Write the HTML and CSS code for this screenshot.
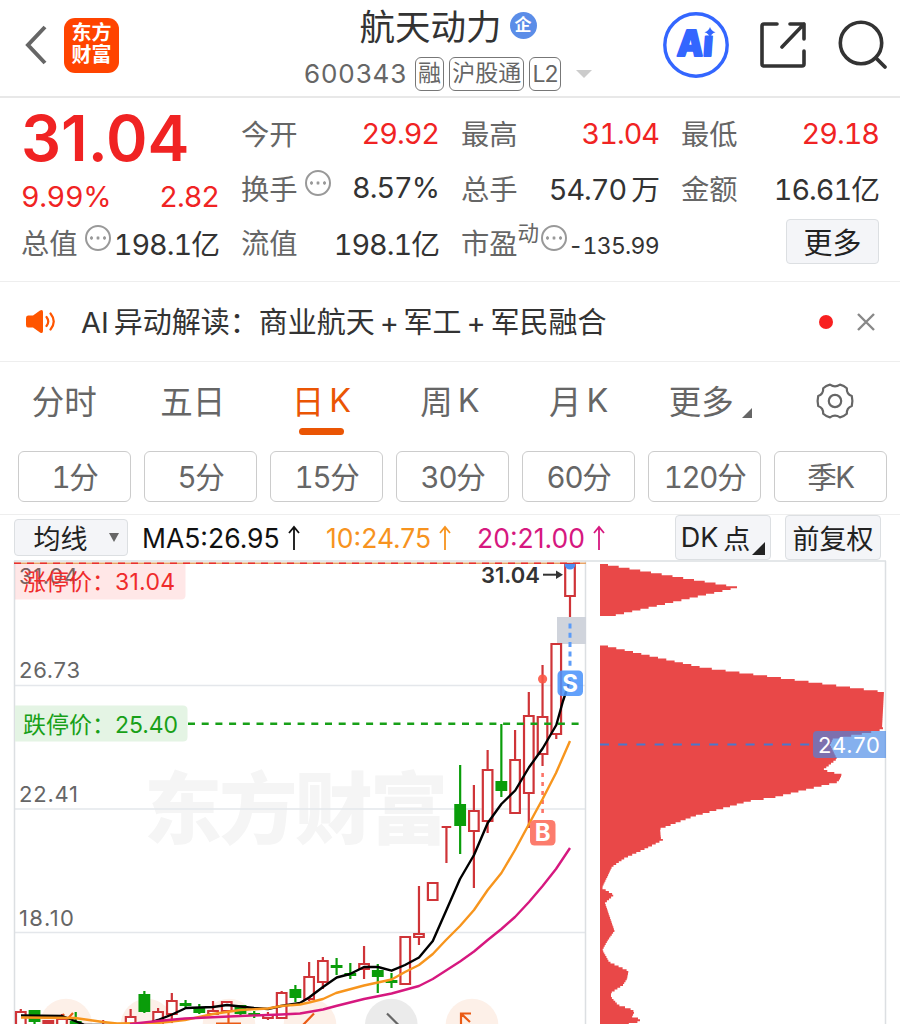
FILE: index.html
```
<!DOCTYPE html>
<html lang="zh-CN">
  <head>
    <meta charset="UTF-8" />
    <meta name="viewport" content="width=device-width,initial-scale=1.0" />
    <title>航天动力 600343</title>
    <link rel="stylesheet" href="styles.css">
  </head>
  <body>
    <header>
      <div class="left">
        <svg class="back" width="24" height="42" viewBox="0 0 24 42"><path d="M21 3 L4 21 L21 39" fill="none" stroke="#666" stroke-width="4" /></svg>
        <div class="logo"><span>东方</span><span>财富</span></div>
      </div>
      <div class="stock">
        <h1>航天动力 <span class="badge">企</span></h1>
        <div class="code">
          <span class="number">600343</span>
          <span class="tag">融</span>
          <span class="tag wide">沪股通</span>
          <span class="tag">L2</span>
          <i class="arrow-down"></i>
        </div>
      </div>
      <div class="icons">
        <svg width="66" height="66" viewBox="0 0 66 66">
          <circle cx="33" cy="33" r="31.2" fill="none" stroke="#3366ff" stroke-width="3.4" />
          <text class="ai" x="16.500" y="44.500" textLength="36" lengthAdjust="spacingAndGlyphs" transform="skewX(-4)">Aı</text>
          <path d="M47 15 Q48.2 19 52.5 20.2 Q48.2 21.500 47 25.500 Q45.800 21.500 41.500 20.200 Q45.800 19 47 15Z" fill="#3366ff" />
        </svg>
        <svg class="share" width="50" height="50" viewBox="0 0 50 50">
          <path d="M18 4 H5 Q3 4 3 6 V44 Q3 46 5 46 H43 Q45 46 45 44 V31 M31 4 H45 V19 M45 4 L23 27" fill="none" stroke="#333" stroke-width="3.600" stroke-linecap="round" stroke-linejoin="round" />
        </svg>
        <svg width="50" height="50" viewBox="0 0 50 50">
          <circle cx="23" cy="23" r="20.700" fill="none" stroke="#333" stroke-width="3.600" />
          <path d="M38 38 L47 47" stroke="#333" stroke-width="3.800" stroke-linecap="round" />
        </svg>
      </div>
    </header>

    <section class="quote">
      <div class="col">
        <div class="price red">31.04</div>
        <div class="row change red"><span>9.99%</span><span>2.82</span></div>
        <div class="row"><label>总值<i class="info"></i></label><span>198.1亿</span></div>
      </div>
      <div class="col">
        <div class="row"><label>今开</label><span class="red">29.92</span></div>
        <div class="row"><label>换手<i class="info"></i></label><span>8.57%</span></div>
        <div class="row"><label>流值</label><span>198.1亿</span></div>
      </div>
      <div class="col">
        <div class="row"><label>最高</label><span class="red">31.04</span></div>
        <div class="row"><label>总手</label><span>54.70<b>万</b></span></div>
        <div class="row"><label>市盈<sup>动</sup><i class="info near"></i></label><span class="small">-135.99</span></div>
      </div>
      <div class="col">
        <div class="row"><label>最低</label><span class="red">29.18</span></div>
        <div class="row"><label>金额</label><span>16.61亿</span></div>
        <div class="row end"><button class="more">更多</button></div>
      </div>
    </section>

    <section class="notice">
      <svg width="32" height="26" viewBox="0 0 32 26">
        <path d="M3 6.500 H8 L15 1.500 Q18 0 18 3 V22 Q18 25 15 23.500 L8 18.500 H3 Q1 18.500 1 16 V9 Q1 6.500 3 6.500Z" fill="#ff5500" />
        <path d="M21.500 8 Q25 12.500 21.500 17 M25.500 4.500 Q32 12.500 25.500 20.500" fill="none" stroke="#ff5500" stroke-width="2.200" stroke-linecap="round" />
      </svg>
      <p>AI<span class="gap">异动解读：</span>商业航天<em>+</em>军工<em>+</em>军民融合</p>
      <i class="dot"></i>
      <svg width="20" height="20" viewBox="0 0 20 20"><path d="M2 2 L18 18 M18 2 L2 18" stroke="#888" stroke-width="2.400" /></svg>
    </section>

    <nav class="tabs">
      <a>分时</a>
      <a>五日</a>
      <a class="active">日<span>K</span></a>
      <a>周<span>K</span></a>
      <a>月<span>K</span></a>
      <a class="has-more">更多<i class="corner"></i></a>
      <a>
        <svg width="40" height="38" viewBox="0 0 40 38">
          <path d="M36.800 14 Q38 19 36.800 24 Q31.500 26 31.800 31.800 Q29 34.500 25 35.300 Q20 32 15 35.300 Q11 34.500 8.200 31.800 Q8.500 26 3.200 24 Q2 19 3.200 14 Q8.500 12 8.200 6.200 Q11 3.500 15 2.700 Q20 6 25 2.700 Q29 3.500 31.800 6.200 Q31.500 12 36.800 14Z" fill="none" stroke="#666" stroke-width="2.200" stroke-linejoin="round" />
          <circle cx="20" cy="19" r="6.200" fill="none" stroke="#666" stroke-width="2.200" />
        </svg>
      </a>
    </nav>

    <div class="periods">
      <button>1分</button>
      <button>5分</button>
      <button>15分</button>
      <button>30分</button>
      <button>60分</button>
      <button>120分</button>
      <button>季K</button>
    </div>

    <div class="averages">
      <button class="select">均线<i class="caret"></i></button>
      <span class="ma5">MA5:26.95<svg width="14" height="26" viewBox="0 0 14 26"><path d="M7 25 V2 M2 8 L7 2 L12 8" /></svg></span>
      <span class="ma10">10:24.75<svg width="14" height="26" viewBox="0 0 14 26"><path d="M7 25 V2 M2 8 L7 2 L12 8" /></svg></span>
      <span class="ma20">20:21.00<svg width="14" height="26" viewBox="0 0 14 26"><path d="M7 25 V2 M2 8 L7 2 L12 8" /></svg></span>
      <button class="dk">DK<span>点</span><i class="corner"></i></button>
      <button class="adjust">前复权</button>
    </div>

    <svg class="chart" width="900" height="464" viewBox="0 560 900 464">
      <text class="watermark" x="144" y="838" textLength="304">东方财富</text>
      <g class="grid">
        <path d="M14 685.500 H586 M14 809 H586 M14 932.500 H586" />
        <path class="frame" d="M14.500 561 V1024 M585.500 561 V1024 M885.500 561 V1024 M14 561 H886" />
      </g>
      <rect x="557" y="617" width="29" height="27" fill="#d0d4dc" />

      <g id="buttons">
        <circle cx="66" cy="1025" r="26.300" />
        <circle cx="147" cy="1025" r="26.300" />
        <circle cx="229" cy="1025" r="26.300" />
        <circle cx="310" cy="1025" r="26.300" />
        <circle class="grey" cx="391.300" cy="1025" r="26.300" />
        <circle cx="472" cy="1025" r="26.300" />
        <path d="M57 1024 L64 1014 M63 1024 L73 1013 M60 1020 L72 1018 M216 1023.500 H241 M228.500 1012 V1024 M303 1025 L314 1013.500 M461 1025 V1013.500 H471 M461 1013.500 L470 1022" />
        <path class="dark" d="M387 1013.500 L398.500 1025" />
      </g>

      <path class="limit-up" d="M14 563.300 H586" />
      <path class="limit-up-dash" d="M14 563.300 H586" />
      <g id="candles"></g>
      <path class="limit-down" d="M188 723.800 H580" />

      <text class="axis" x="19" y="584" textLength="59">31.04</text>
      <text class="axis" x="19" y="677.500" textLength="61">26.73</text>
      <text class="axis" x="19" y="801.500" textLength="59">22.41</text>
      <text class="axis" x="19" y="925.500" textLength="55">18.10</text>

      <path d="M15 564 H185.500 V595 Q185.500 599.500 181 599.500 H15Z" fill="#f44" fill-opacity=".13" />
      <text class="label up" x="23" y="590">涨停价：</text>
      <text class="label up" x="115" y="590" textLength="60">31.04</text>
      <path d="M15 705.500 H183 Q187.500 705.500 187.500 710 V737 Q187.500 741.500 183 741.500 H15Z" fill="#e4f4e4" />
      <text class="label down" x="23" y="732.500">跌停价：</text>
      <text class="label down" x="115" y="732.500" textLength="63">25.40</text>

      <text class="latest" x="481" y="583" textLength="59">31.04</text>
      <path d="M543 574.700 H557" stroke="#333" stroke-width="2" />
      <path d="M556 570.500 L563 574.700 L556 579Z" fill="#333" />

      <path d="M564.500 564 A5.500 5.500 0 0 0 575.500 564Z" fill="#4c90f5" />
      <path d="M570 623.500 V668" stroke="#5c9cf8" stroke-width="3" stroke-dasharray="5 4.300" />
      <circle cx="542.600" cy="679" r="4.600" fill="#fb5645" fill-opacity=".9" />
      <path d="M542.600 773 V815" stroke="#fc7468" stroke-width="2.600" stroke-dasharray="4 5" />
      <g id="lines"></g>
      <rect x="557.500" y="670.500" width="25.500" height="25.500" rx="4.500" fill="#4c94fb" fill-opacity=".88" />
      <text class="mark" x="570.200" y="692">S</text>
      <rect x="530" y="820" width="25.500" height="25.500" rx="4.500" fill="#fc7565" fill-opacity=".95" />
      <text class="mark" x="542.800" y="841">B</text>

      <g id="profile"></g>
      <path d="M600 744.500 H813" stroke="#4a78cc" stroke-width="2" stroke-dasharray="9 9.200" />
      <path d="M886 731 H817 Q813 731 813 735 V754 Q813 758 817 758 H886Z" fill="#4386e5" fill-opacity=".65" />
      <text class="cost" x="818" y="753" textLength="62">24.70</text>
    </svg>

    <script src="chart.js"></script>
  </body>
</html>
```
FILE: styles.css
```
* {
  box-sizing: border-box;
}
body {
  margin: 0;
  width: 900px;
  height: 1024px;
  overflow: hidden;
  background: #fff;
  color: #333;
  font-family: Inter, "Noto Sans CJK SC", sans-serif;
  font-weight: 400;
}
button {
  font-family: inherit;
  font-weight: inherit;
  padding: 0;
  cursor: pointer;
}
i, em {
  font-style: normal;
}
.red {
  color: #f02323;
}

/* header */
header {
  display: grid;
  grid-template-columns: 280px 288px 1fr;
  height: 98px;
  padding-left: 24px;
  border-bottom: 2px solid #e8e8e8;
}
.left {
  display: flex;
  align-items: center;
  gap: 16px;
  height: 90px;
}
.logo {
  display: flex;
  flex-direction: column;
  align-items: center;
  justify-content: center;
  width: 55px;
  height: 55px;
  padding-bottom: 2px;
  border-radius: 11px;
  background: #ff4400;
  color: #fff;
  font-size: 20px;
  font-weight: 700;
  line-height: 22.5px;
}
.stock {
  display: flex;
  flex-direction: column;
  align-items: center;
}
h1 {
  display: flex;
  align-items: center;
  gap: 8px;
  margin: 0;
  height: 53px;
  padding-bottom: 4px;
  font-size: 35.5px;
  font-weight: 400;
}
.badge {
  width: 27px;
  height: 27px;
  border-radius: 50%;
  background: #5b8de8;
  color: #fff;
  font-size: 17px;
  font-weight: 700;
  line-height: 26px;
  text-align: center;
  margin-top: 2px;
}
.code {
  display: flex;
  align-items: center;
  width: 288px;
  height: 42px;
  color: #666;
}
.number {
  width: 111px;
  padding-bottom: 1px;
  font-size: 26px;
  letter-spacing: .9px;
}
.tag {
  width: 30px;
  height: 34px;
  margin-right: 5px;
  border: 1.5px solid #777;
  border-radius: 6px;
  font-size: 23px;
  line-height: 31px;
  text-align: center;
  white-space: nowrap;
}
.tag.wide {
  width: 75px;
}
.tag:nth-child(4) {
  width: 32px;
  letter-spacing: -1px;
  line-height: 32px;
}
.arrow-down {
  margin-left: 10px;
  border: 8px solid transparent;
  border-top-color: #ccc;
  border-bottom: 0;
}
.icons {
  display: flex;
  align-items: center;
  height: 90px;
  padding-left: 71px;
}
.share {
  margin: 0 29px 0 30px;
}
.ai {
  fill: #3366ff;
  stroke: #3366ff;
  stroke-width: 1.8px;
  stroke-linejoin: round;
  font-size: 36px;
  font-weight: 900;
}

/* quote */
.quote {
  display: grid;
  grid-template-columns: repeat(4, 198px);
  column-gap: 22px;
  height: 183px;
  padding: 9px 0 0 21px;
}
.row {
  display: flex;
  align-items: center;
  justify-content: space-between;
  height: 54.5px;
  font-size: 28.8px;
  font-variant-numeric: tabular-nums;
  letter-spacing: -1px;
  white-space: nowrap;
}
.row > span {
  padding-bottom: 2px;
}
.price {
  height: 71px;
  font-size: 63px;
  font-weight: 600;
  line-height: 62px;
}
.change {
  height: 38px;
}
.change span:first-child {
  letter-spacing: -.4px;
}
label {
  display: flex;
  align-items: center;
  padding-bottom: 3px;
  color: #666;
  font-size: 28.3px;
  letter-spacing: 0;
}
b {
  margin-left: 5px;
  font-weight: 400;
}
sup {
  font-size: 21.5px;
  line-height: 20px;
  margin-bottom: 17px;
}
.info {
  width: 26px;
  height: 26px;
  margin: 0 0 8px 7px;
  border: 2px solid #999;
  border-radius: 50%;
  background: radial-gradient(circle, #999 1.4px, transparent 1.9px) center / 6.5px 22px;
  background-clip: content-box;
  padding: 0 1px;
}
.info.near {
  margin-left: 2px;
}
.row > .small {
  padding: 6px 0 0;
  font-size: 23px;
  letter-spacing: -.7px;
}
.end {
  justify-content: flex-end;
}
.more {
  width: 93px;
  height: 45px;
  margin-bottom: 4px;
  padding-bottom: 1px;
  border: 1.5px solid #dcdfe2;
  border-radius: 4px;
  background: #f4f5f8;
  color: #222;
  font-size: 29px;
}

/* notice */
.notice {
  display: flex;
  align-items: center;
  height: 81px;
  padding: 0 24px 0 25px;
  border-top: 1px solid #eee;
  border-bottom: 1px solid #eee;
}
.notice p {
  flex: 1;
  margin: 0 0 0 24px;
  padding-bottom: 4px;
  font-size: 29px;
}
.gap {
  margin-left: 5px;
}
.notice em {
  margin: 0 4.8px;
}
.dot {
  width: 14px;
  height: 14px;
  margin-right: 23px;
  border-radius: 50%;
  background: #f82020;
}

/* tabs */
.tabs {
  display: grid;
  grid-template-columns: repeat(7, 1fr);
  height: 78px;
}
.tabs a {
  display: flex;
  position: relative;
  align-items: center;
  justify-content: center;
  padding-bottom: 4px;
  color: #666;
  font-size: 32.5px;
}
.tabs a:last-child {
  padding: 0 2px 0 0;
}
.tabs span {
  margin-left: 5px;
  padding-top: 3px;
}
.tabs .active {
  color: #ea5504;
}
.active::after {
  content: "";
  position: absolute;
  bottom: 5px;
  left: 42px;
  width: 45px;
  height: 7px;
  border-radius: 4px;
  background: #ea5504;
}
.has-more {
  padding-left: 6px;
}
.corner {
  margin: 28px 0 0 8px;
  border-style: solid;
  border-width: 0 0 10px 10px;
  border-color: transparent transparent #666;
}

.periods {
  display: grid;
  grid-template-columns: repeat(7, 113px);
  column-gap: 13px;
  height: 75px;
  padding: 11px 0 0 18px;
  border-bottom: 1px solid #eee;
}
.periods button {
  height: 51px;
  padding-bottom: 4px;
  border: 1.5px solid #ccc;
  border-radius: 6px;
  background: #fff;
  color: #666;
  font-size: 29.5px;
  font-variant-numeric: tabular-nums;
  letter-spacing: -1.3px;
}

/* moving averages */
.averages {
  display: flex;
  align-items: center;
  height: 45px;
  padding-left: 14px;
  font-size: 26.5px;
  white-space: nowrap;
}
.averages button {
  display: flex;
  align-items: center;
  justify-content: center;
  height: 45px;
  border: 1.5px solid #dcdfe2;
  border-radius: 4px;
  background: #f4f5f8;
  color: #222;
  font-size: 27px;
}
.averages .select {
  width: 114px;
  height: 37px;
  padding-left: 10px;
}
.caret {
  margin-left: 21px;
  border: 5.5px solid transparent;
  border-top: 9px solid #666;
  border-bottom: 0;
}
.averages svg {
  margin-left: 7px;
  fill: none;
  stroke: currentColor;
  stroke-width: 1.8px;
  vertical-align: -3px;
}
.ma5 {
  width: 184px;
  margin-left: 14px;
  color: #111;
}
.ma10 {
  width: 151px;
  color: #f7931e;
}
.ma20 {
  width: 198px;
  color: #d6187f;
}
.averages .dk {
  width: 96px;
}
.dk span {
  margin-left: 5px;
}
.dk .corner {
  margin: 22px 0 0 2px;
  border-width: 0 0 13px 13px;
  border-bottom-color: #222;
}
.averages .adjust {
  width: 96px;
  margin-left: 14px;
}

/* chart */
.chart {
  display: block;
}
.watermark {
  fill: #f5f5f5;
  font-size: 78px;
  font-weight: 900;
}
.grid path {
  fill: none;
  stroke: #e4e7eb;
  stroke-width: 1.5px;
}
.grid .frame {
  stroke: #dcdfe2;
}
.axis {
  fill: #666;
  font-size: 22px;
}
.label {
  font-size: 23px;
}
.up {
  fill: #ef2b2b;
}
.down {
  fill: #18a018;
}
.latest {
  fill: #333;
  font-size: 22px;
  font-weight: 600;
}
.mark {
  fill: #fff;
  font-size: 24px;
  font-weight: 700;
  text-anchor: middle;
}
.cost {
  fill: #fff;
  font-size: 22px;
}
.limit-up {
  stroke: #e8a468;
  stroke-width: 1.6px;
}
.limit-up-dash {
  stroke: #e83030;
  stroke-width: 1.6px;
  stroke-dasharray: 7 6;
}
.limit-down {
  stroke: #18a018;
  stroke-width: 2.4px;
  stroke-dasharray: 7 6.700;
}
.rise {
  fill: #fff;
  stroke: #cf3438;
  stroke-width: 2.2px;
}
.fall {
  fill: #0a9d0a;
  stroke: #0a9d0a;
  stroke-width: 2.2px;
}
#lines polyline {
  fill: none;
  stroke-width: 2.4px;
  stroke-linejoin: round;
}
#profile {
  fill: #e94848;
}
#buttons circle {
  fill: #fdf0e8;
}
#buttons .grey {
  fill: #ebebeb;
}
#buttons path {
  fill: none;
  stroke: #ea5a14;
  stroke-width: 2.2px;
}
#buttons .dark {
  stroke: #666;
}
```
FILE: chart.js
```
const svgNS = 'http://www.w3.org/2000/svg';

function add(parent, name, attrs) {
  const el = document.createElementNS(svgNS, name);
  for (const key in attrs) el.setAttribute(key, attrs[key]);
  parent.appendChild(el);
}

// direction, high, body top, body bottom, low - newest first
const candles = [
  ['rise', 563, 564, 596, 617],
  ['rise', 644, 644, 734, 739],
  ['rise', 665, 717, 754, 766],
  ['rise', 692, 716, 793, 828],
  ['rise', 730, 760, 813, 813],
  ['fall', 724, 782, 790, 797],
  ['rise', 750, 770, 821, 833],
  ['rise', 785, 811, 831, 888],
  ['fall', 765, 805, 825, 854],
  ['rise', 827, 827, 827, 863],
  ['rise', 883, 883, 900, 900],
  ['rise', 886, 934, 937, 945],
  ['rise', 937, 937, 984, 985],
  ['fall', 973, 981, 982, 988],
  ['fall', 964, 971, 976, 993],
  ['rise', 946, 964, 969, 979],
  ['fall', 963, 974, 975, 979],
  ['fall', 958, 966, 967, 975],
  ['rise', 957, 961, 982, 989],
  ['rise', 962, 977, 999, 1001],
  ['fall', 985, 990, 997, 1002],
  ['rise', 991, 993, 1018, 1019],
  ['rise', 1012, 1015, 1018, 1020],
  ['fall', 1011, 1014, 1015, 1018],
  ['fall', 1005, 1006, 1013, 1016],
  ['rise', 1001, 1002, 1011, 1012],
  ['rise', 1001, 1011, 1014, 1015],
  ['fall', 1004, 1008, 1012, 1014],
  ['fall', 1000, 1004, 1005, 1008],
  ['rise', 993, 1001, 1014, 1023],
  ['rise', 1008, 1012, 1026, 1030],
  ['fall', 991, 995, 1011, 1013],
  ['rise', 1009, 1017, 1030, 1030],
  ['fall', 1026, 1027, 1030, 1030],
  ['rise', 1020, 1026, 1030, 1030],
  ['fall', 1025, 1027, 1030, 1030],
  ['fall', 1012, 1022, 1028, 1030],
  ['rise', 1014, 1019, 1028, 1030],
  ['rise', 1020, 1021, 1023, 1030],
  ['fall', 1010, 1011, 1021, 1025],
  ['rise', 1009, 1012, 1030, 1030]
];

const candleGroup = document.querySelector('#candles');
candles.forEach(([type, high, top, bottom, low], i) => {
  const x = 570 - i * 13.73;
  add(candleGroup, 'path', {
    class: type,
    d: `M${x} ${high}V${top}M${x - 4.8} ${top}H${x + 4.8}V${bottom}H${x - 4.8}ZM${x} ${bottom}V${low}`
  });
});

const lines = {
  '#000': '21,1015.5 62,1016 75,1021 85,1025 144,1025 158,1020 172,1014.5 186,1008 213,1007 227,1005 254,1008 268,1009 281,1006 300,1003 309,997.5 323,987 336.7,977.5 350,974 364,967 378,967 391.6,970.7 405,965 419,957.5 432.8,941 446,911 460,879 474,855 487.7,823 501.4,804 515.2,790.5 528.9,767.5 542.6,748.5 556.3,725 563,701 570,680',
  '#f7951d': '21,1017.5 75,1018 103,1022 117,1023.5 158,1023 185,1020 213,1014 240,1010 268,1008.5 281,1006 300,1004.5 309,1002.5 323,999 336,993 364,985.5 391.6,979.5 405,972 419,965 432.8,954 446,940 460,926 474,910 487.7,890 501.4,873 515,850 529,824 542.6,799 556,773 570,741',
  '#d6187f': '130,1024 158,1021 185,1018.5 240,1016 281,1014.5 300,1013.5 323,1009.5 336,1006 364,999 391.6,993.5 419,986 432.8,979 460,961.5 474,951.5 487.7,940 501.4,929 515,917 529,902 542.6,886 556,869 570,848'
};
for (const color in lines) {
  add(document.querySelector('#lines'), 'polyline', { points: lines[color], stroke: color });
}

// right edge of the chip distribution, x by y
const peaks = [
  [[608, 564], [738, 586.5], [608, 616]],
  [[608, 645.5], [702, 666.5], [884, 691], [882, 727], [885, 728], [867, 732], [833, 738],
   [830, 744], [837, 758], [823, 769], [842, 774], [838, 781], [774, 796.5], [750, 800],
   [695, 815], [660, 828], [661, 838], [663, 839], [643, 849], [625, 857], [612, 866],
   [602, 887], [614, 894], [605, 902], [614.5, 930], [608, 939], [602.5, 949], [609, 961],
   [628.5, 970], [627, 978], [623, 984], [611, 992], [611, 996], [618, 1004], [633, 1009],
   [634, 1012], [632, 1016], [640, 1018], [640, 1021], [628, 1022], [631, 1026]]
];
const step = 1.86;
const profile = document.querySelector('#profile');
peaks.forEach(points => {
  let d = `M600 ${points[0][1]}`;
  for (let y = points[0][1]; y < points[points.length - 1][1]; y += step) {
    const n = points.findIndex(p => p[1] > y);
    const [x1, y1] = points[n - 1];
    const [x2, y2] = points[n];
    const x = x1 + (x2 - x1) * (y - y1) / (y2 - y1);
    d += `H${x.toFixed(1)}v${step}`;
  }
  add(profile, 'path', { d: d + 'H600Z' });
});
```
